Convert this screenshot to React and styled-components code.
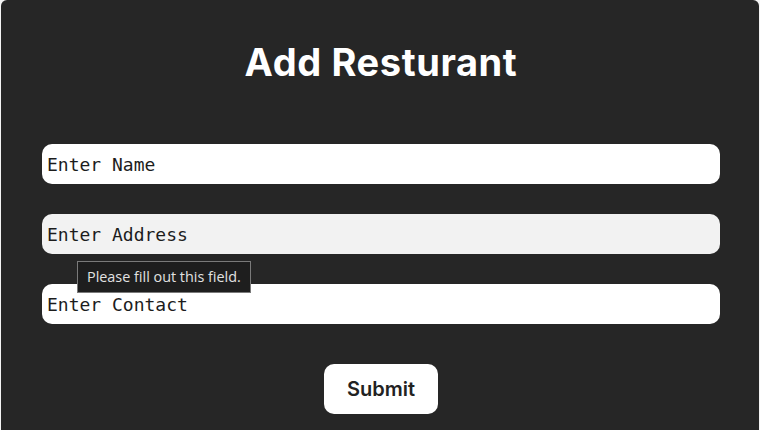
import React from "react";
import styled, { createGlobalStyle } from "styled-components";

const Global = createGlobalStyle`
  html, body {
    margin: 0;
    background: #f4f4f4;
  }
`;

const Panel = styled.div`
  margin-left: 1px;
  width: 758px;
  min-height: 440px;
  background: #262626;
  border-radius: 6px;
  box-sizing: border-box;
  padding: 36px 39px 0 41px;
`;

const Title = styled.h1`
  margin: 0;
  text-align: center;
  color: #fff;
  font-family: Inter, "Open Sans", sans-serif;
  font-weight: 700;
  font-size: 38px;
  letter-spacing: 0.6px;
  line-height: 52px;
`;

const Form = styled.form`
  display: flex;
  flex-direction: column;
  gap: 30px;
  margin-top: 56px;
`;

const Field = styled.div`
  position: relative;
`;

const Input = styled.input`
  display: block;
  width: 100%;
  height: 40px;
  box-sizing: border-box;
  border: none;
  outline: none;
  border-radius: 10px;
  padding: 0 5px;
  background: ${(p) => (p.$hover ? "#f2f2f2" : "#fff")};
  color: #1c1c1c;
  font-family: "DejaVu Sans Mono", "Liberation Mono", monospace;
  font-size: 18px;
  &::placeholder {
    color: #1c1c1c;
    opacity: 1;
  }
`;

const Tip = styled.div`
  position: absolute;
  left: 35px;
  top: 47px;
  z-index: 2;
  background: #1e1e1e;
  border: 1px solid #7a7a7a;
  color: #e2e2e2;
  font-family: "Open Sans", "Noto Sans", sans-serif;
  font-size: 14.4px;
  padding: 5px 9px 6px;
  white-space: nowrap;
`;

const Actions = styled.div`
  display: flex;
  justify-content: center;
  margin-top: 10px;
`;

const Button = styled.button`
  width: 114px;
  height: 50px;
  border: none;
  border-radius: 10px;
  background: #fff;
  color: #222;
  font-family: Inter, "Open Sans", sans-serif;
  font-weight: 600;
  font-size: 20px;
  cursor: pointer;
`;

const fields = [
  { name: "name", placeholder: "Enter Name" },
  { name: "address", placeholder: "Enter Address", hover: true, tip: true },
  { name: "contact", placeholder: "Enter Contact" },
];

const App = () => {
  return (
    <>
      <Global />
      <Panel>
        <Title>Add Resturant</Title>
        <Form onSubmit={(e) => e.preventDefault()}>
          {fields.map(({ name, placeholder, hover, tip }) => (
            <Field key={name}>
              <Input name={name} placeholder={placeholder} $hover={hover} />
              {tip && <Tip>Please fill out this field.</Tip>}
            </Field>
          ))}
          <Actions>
            <Button type="submit">Submit</Button>
          </Actions>
        </Form>
      </Panel>
    </>
  );
};

export default App;
